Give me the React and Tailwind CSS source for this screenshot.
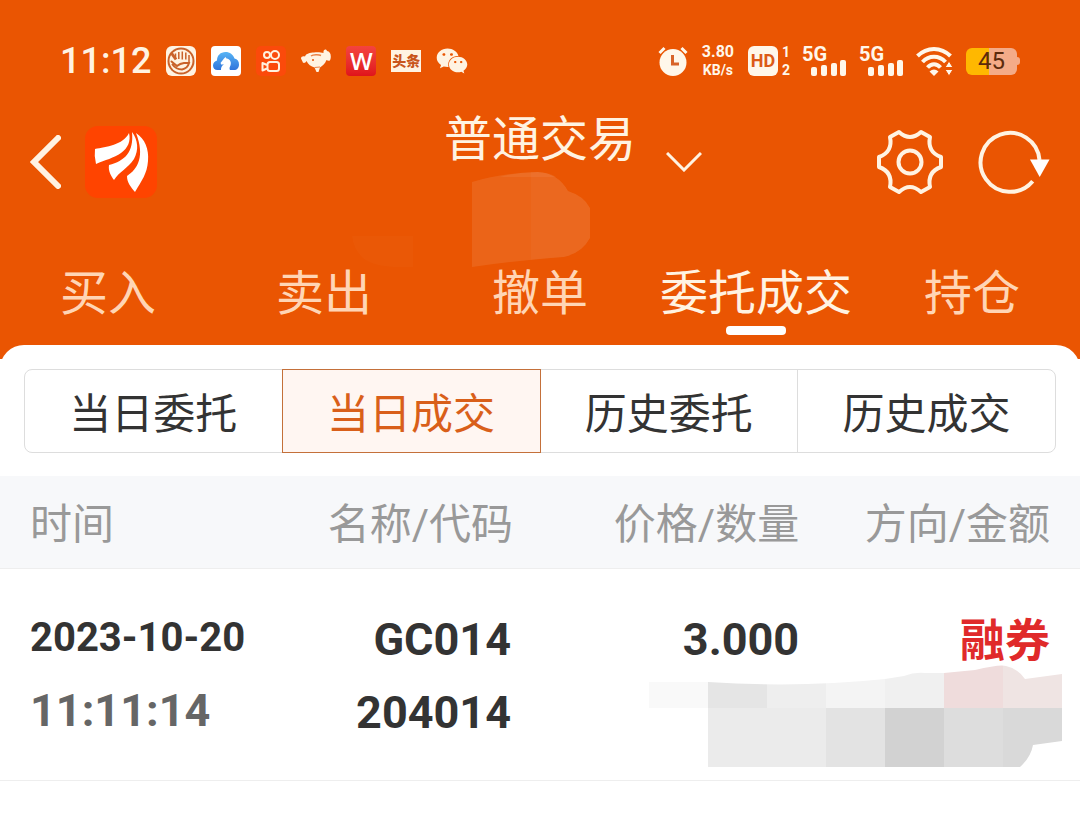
import { useState } from "react";
import { FaWeixin } from "react-icons/fa";

const tabs = ["买入", "卖出", "撤单", "委托成交", "持仓"];
const filters = ["当日委托", "当日成交", "历史委托", "历史成交"];

const trades = [
  {
    date: "2023-10-20",
    time: "11:11:14",
    name: "GC014",
    code: "204014",
    price: "3.000",
    side: "融券",
  },
];

function HandIcon() {
  return (
    <svg viewBox="0 0 30 30" className="size-[30px]">
      <rect width="30" height="30" rx="6" fill="#fff3e2" />
      <circle cx="15" cy="15" r="13.500" fill="#c9622a" />
      <circle cx="15" cy="15" r="11.500" fill="#fff3e2" />
      <path
        d="M9.500 7.500V12M12.800 6V13M16.300 5.500V13.500M19.800 6.500V13.500M23 9V16"
        stroke="#c9622a"
        strokeWidth="1.500"
      />
      <path
        d="M5.500 15.500L11 20Q14 17.500 18 17H23Q21.500 22.500 16 23.500Q10 23.500 6.500 18.500"
        fill="none"
        stroke="#c9622a"
        strokeWidth="2"
        strokeLinecap="round"
      />
      <path d="M5 6.500L10 13.500" stroke="#c9622a" strokeWidth="3" />
    </svg>
  );
}

function CloudIcon() {
  return (
    <svg viewBox="0 0 30 30" className="size-[30px]">
      <defs>
        <linearGradient id="cloud" x1="0" y1="0" x2="0" y2="1">
          <stop offset="0" stopColor="#57b4f5" />
          <stop offset="1" stopColor="#2f74dc" />
        </linearGradient>
      </defs>
      <rect width="30" height="30" rx="4" fill="#fff" />
      <path
        d="M6.500 24C3.500 24 2 22 2 19.500C2 17 3.800 15 6 14.500C6 9.500 9.500 6 14.500 6C19 6 22 8.500 23.500 12.500C26.500 13 28 15.500 28 18.500C28 22 26 24 23 24Z"
        fill="url(#cloud)"
      />
      <path
        d="M10 24C10 20.500 11.500 19.500 13 18L10.500 18.700L9.500 17L13 12.500L14.500 11L15.500 12.500C19.500 13 21 17 19 20.500C18.300 22 18.500 23 19 24Z"
        fill="#fff"
      />
    </svg>
  );
}

function CameraIcon() {
  return (
    <svg viewBox="0 0 30 30" className="size-[30px]">
      <rect width="30" height="30" rx="5" fill="#fb4a0b" />
      <g fill="none" stroke="#fff1df" strokeWidth="2">
        <circle cx="11" cy="9" r="3" />
        <circle cx="19" cy="9" r="4" />
        <rect x="11.500" y="16" width="11.500" height="9" rx="2.500" />
        <path d="M11 19L6.500 17V24.500L11 22.500" strokeLinejoin="round" />
      </g>
    </svg>
  );
}

function DogIcon() {
  return (
    <svg viewBox="0 0 30 30" className="size-[30px]">
      <path
        d="M0 12.500C0 10.500 2 10 4 10.500C5 7.500 9 6.500 13 6.500C17 6 20 6.500 22.500 7C22 3.500 25 2.500 26 5C29 5.500 30.500 8.500 29.500 13C29 15.500 27 15 25.500 14C24 18 21 20 19 21.500L17.500 26H15.500L13.500 21.500C10 20.500 7 18.500 5.500 15C4.500 17.500 1.500 17.500 1.500 15.500Z"
        fill="#fff3e2"
      />
      <path d="M10 10C12 8.500 18 8.500 20 9.500" fill="none" stroke="#ea8145" strokeWidth="1.500" />
      <circle cx="12" cy="14" r="1" fill="#ea5502" />
      <path d="M13.500 21.500L19 21" stroke="#ea8145" strokeWidth="1" />
    </svg>
  );
}

function AlarmIcon() {
  return (
    <svg viewBox="0 0 30 30" className="size-[30px]">
      <circle cx="15" cy="16.500" r="13.500" fill="#fff7ea" />
      <path d="M1.500 7L6.500 2M28.500 7L23.500 2" stroke="#fff7ea" strokeWidth="3" />
      <path d="M14.500 9V18H21" fill="none" stroke="#d8642a" strokeWidth="3" />
    </svg>
  );
}

function HdIcon() {
  return (
    <div className="flex h-[30px] items-center gap-1 font-[Roboto,sans-serif] font-bold">
      <span className="flex size-[30px] items-center justify-center rounded-md bg-[#fff7ea] text-lg leading-none text-[#dc5a17]">
        HD
      </span>
      <div className="text-sm leading-[18px]">
        <div>1</div>
        <div>2</div>
      </div>
    </div>
  );
}

function SignalIcon() {
  return (
    <div className="relative h-[30px] w-[45px] font-[Roboto,sans-serif]">
      <div className="-mt-0.5 text-xl leading-5 font-bold">5G</div>
      <svg viewBox="0 0 36 16" className="absolute right-0 bottom-0 h-4 w-9" fill="#fff7ea">
        <rect x="0" y="7" width="6" height="9" rx="2" />
        <rect x="10" y="5" width="6" height="11" rx="2" />
        <rect x="20" y="3" width="6" height="13" rx="2" />
        <rect x="29" y="0" width="6" height="16" rx="2" />
      </svg>
    </div>
  );
}

function WifiIcon() {
  return (
    <svg viewBox="0 0 38 30" className="h-[30px] w-[38px]">
      <g fill="none" stroke="#fff7ea" strokeWidth="4">
        <path d="M1.500 10C11 .500 25 .500 34.500 10" />
        <path d="M6.500 16C13 9 23 9 29.500 16" />
        <path d="M11.500 21.500C15.500 17 20.500 17 24.500 21.500" />
      </g>
      <path d="M13.500 25.500Q18 21.500 22.500 25.500L18 30Z" fill="#fff7ea" />
      <path d="M33 15L37 21.500H29ZM33 30L37 23.500H29Z" fill="#fff7ea" stroke="#ea5502" strokeWidth="1" />
    </svg>
  );
}

function BrandLogo() {
  return (
    <svg viewBox="0 0 72 72" className="size-[72px]">
      <rect width="72" height="72" rx="13" fill="#ff4400" />
      <g fill="#fff">
        <path d="M10 23C21 21 38 19 44 7C46 15 43 22 36 27C29 32 20 34 11 38Q9 30 10 23Z" />
        <path d="M47 6C53 14 54 24 49 33C43 42 34 46 29 54C26 50 23 45 24 39C40 35 49 26 47 6Z" />
        <path d="M51 7C60 13 64 23 63 35C62 48 57 54 50 66C46 61 42 57 42 50C53 43 60 30 51 7Z" />
      </g>
    </svg>
  );
}

function GearIcon() {
  return (
    <svg viewBox="-34 -34 68 68" className="size-[68px]" fill="none" stroke="#fff3e2" strokeWidth="4" strokeLinejoin="round">
      <path d="M31 -5L31 5Q17 10 20 25L11 30Q0 20 -11 30L-20 25Q-17 10 -31 5L-31 -5Q-17 -10 -20 -25L-11 -30Q0 -20 11 -30L20 -25Q17 -10 31 -5Z" />
      <circle r="11.500" />
    </svg>
  );
}

function RefreshIcon() {
  return (
    <svg viewBox="0 0 72 64" className="h-16 w-[72px]">
      <path d="M54.700 51.300A29.500 29.500 0 1 1 61.500 30" fill="none" stroke="#fff3e2" strokeWidth="4" />
      <path d="M52 29.500H71.500L61.700 47Z" fill="#fff" />
    </svg>
  );
}

function StatusBar() {
  return (
    <div className="flex h-[34px] items-center justify-between px-[60px]">
      <div className="flex items-center gap-[15px]">
        <span className="font-[Roboto,sans-serif] text-4xl font-medium text-[#fff3e2]">11:12</span>
        <HandIcon />
        <CloudIcon />
        <CameraIcon />
        <DogIcon />
        <span className="flex size-[30px] items-center justify-center rounded bg-linear-to-b from-[#f4433f] to-[#e0131b] font-['Open_Sans',sans-serif] text-2xl leading-none font-semibold text-white">
          W
        </span>
        <span className="flex h-[22px] w-[30px] items-center justify-center bg-[#fff3e2] text-sm font-black text-[#c9551c]">
          头条
        </span>
        <FaWeixin className="size-8 text-[#fff3e2]" />
      </div>
      <div className="flex items-center gap-3 text-[#fff7ea]">
        <AlarmIcon />
        <div className="w-9 text-center font-[Roboto,sans-serif] leading-[18px] font-bold">
          <div className="text-base leading-[18px]">3.80</div>
          <div className="text-sm leading-[18px]">KB/s</div>
        </div>
        <HdIcon />
        <SignalIcon />
        <SignalIcon />
        <WifiIcon />
        <div className="flex items-center">
          <span className="flex h-[27px] w-[51px] items-center justify-center rounded-md bg-linear-to-r from-[#ffb800] from-45% to-[#f4ab88] to-45% font-[Roboto,sans-serif] text-2xl text-[#5c2b0c]">
            45
          </span>
          <span className="h-2 w-[3px] rounded-r bg-[#f4ab88]" />
        </div>
      </div>
    </div>
  );
}

function HeaderMosaic() {
  return (
    <svg viewBox="0 0 240 96" className="pointer-events-none absolute top-[171px] left-[352px] h-24 w-60" fill="#fff">
      <path d="M120 11Q150 2 186 1Q206 2 216 20Q232 25 238 37V67Q230 82 212 86Q170 89 120 96Z" opacity=".09" />
      <path d="M179 1H186Q206 2 216 20Q232 25 238 37V67Q230 82 212 86L179 89Z" opacity=".03" />
      <path d="M148 6Q165 1 186 1Q200 2 204 6Z" opacity=".06" />
      <path d="M0 65H61V96Q20 98 9 85Q1 76 0 65Z" opacity=".02" />
    </svg>
  );
}

function AmountMosaic() {
  return (
    <svg viewBox="649 664 413 103" className="pointer-events-none absolute top-[95px] right-[18px] h-[103px] w-[413px]">
      <clipPath id="smudge">
        <path d="M649 682L708 682Q800 688 885 679L904 676Q914 672 925 673L944 673L975 670Q1000 664 1006 666Q1017 668 1025 679L1062 674V741L1033 745Q1031 757 1020 767H649Z" />
      </clipPath>
      <g clipPath="url(#smudge)" shapeRendering="crispEdges">
        <rect x="649" y="664" width="59" height="44" fill="#f9f9f9" />
        <rect x="708" y="664" width="59" height="44" fill="#e5e5e5" />
        <rect x="767" y="664" width="59" height="44" fill="#eeeeee" />
        <rect x="826" y="664" width="59" height="44" fill="#f4f4f4" />
        <rect x="885" y="664" width="59" height="44" fill="#f0f0f0" />
        <rect x="944" y="664" width="59" height="44" fill="#efdcdc" />
        <rect x="1003" y="664" width="59" height="44" fill="#efe4e3" />
        <rect x="708" y="708" width="118" height="59" fill="#ebebeb" />
        <rect x="826" y="708" width="59" height="59" fill="#e3e3e3" />
        <rect x="885" y="708" width="59" height="59" fill="#d2d2d2" />
        <rect x="944" y="708" width="59" height="59" fill="#dddddd" />
        <rect x="1003" y="708" width="59" height="59" fill="#d9d9d9" />
      </g>
    </svg>
  );
}

export default function App() {
  const [tab, setTab] = useState("委托成交");
  const [filter, setFilter] = useState("当日成交");

  return (
    <div className="min-h-screen bg-white font-[Roboto,'Noto_Sans_CJK_SC',sans-serif] text-[#333]">
      <header className="relative bg-[#ea5502] pt-11 pb-6">
        <HeaderMosaic />
        <StatusBar />

        <div className="mt-12 grid grid-cols-[1fr_auto_1fr] items-center px-[30px]">
          <div className="flex items-center gap-6">
            <button type="button" aria-label="返回">
              <svg viewBox="0 0 31 54" className="h-[54px] w-[31px]" fill="none" stroke="#fff3e2" strokeWidth="6" strokeLinecap="round">
                <path d="M28 3L4 27L28 51" />
              </svg>
            </button>
            <BrandLogo />
          </div>
          <h1 className="self-start text-5xl leading-7 text-[#fff3e2]">普通交易</h1>
          <div className="flex items-center justify-between pl-[30px]">
            <button type="button" aria-label="切换账户">
              <svg viewBox="0 0 36 20" className="h-5 w-9" fill="none" stroke="#fff3e2" strokeWidth="3">
                <path d="M1 1L18 18L35 1" />
              </svg>
            </button>
            <div className="flex items-center gap-[34px]">
              <button type="button" aria-label="设置">
                <GearIcon />
              </button>
              <button type="button" aria-label="刷新">
                <RefreshIcon />
              </button>
            </div>
          </div>
        </div>

        <nav className="mt-[66px] flex">
          {tabs.map((item) => (
            <button
              key={item}
              type="button"
              onClick={() => setTab(item)}
              className={`flex flex-1 flex-col items-center gap-0.5 text-5xl leading-[60px] ${
                item === tab ? "text-[#fff3e2]" : "text-[#ffd5b5]"
              }`}
            >
              {item}
              <span className={`h-[9px] w-[60px] rounded ${item === tab ? "bg-white" : ""}`} />
            </button>
          ))}
        </nav>
      </header>

      <main className="relative -mt-[14px] rounded-t-3xl bg-white pt-6">
        <div className="mx-6 flex h-[84px] rounded-lg border border-[#ddd]">
          {filters.map((item, i) => (
            <button
              key={item}
              type="button"
              onClick={() => setFilter(item)}
              className={`flex-1 pt-1.5 text-[42px] ${
                item === filter
                  ? "-my-px border border-[#c4703a] bg-[#fff6f2] text-[#d95f1a]"
                  : i === filters.length - 1
                    ? "border-l border-[#ddd]"
                    : ""
              }`}
            >
              {item}
            </button>
          ))}
        </div>

        <table className="mt-[23px] w-full table-fixed">
          <thead>
            <tr className="h-[92px] border-b border-[#eee] bg-[#f7f8fa] text-[42px] text-[#999]">
              <th className="w-[25%] pt-1.5 pl-[30px] text-left font-normal">时间</th>
              <th className="w-[22.5%] pt-1.5 text-right font-normal">名称/代码</th>
              <th className="w-[26.5%] pt-1.5 text-right font-normal">价格/数量</th>
              <th className="w-[26%] pt-1.5 pr-[30px] text-right font-normal">方向/金额</th>
            </tr>
          </thead>
          <tbody>
            {trades.map((trade) => (
              <tr key={trade.time} className="h-[212px] border-b border-[#eee] align-top text-[45px] leading-[73px] font-bold">
                <td className="pt-8 pl-[30px]">
                  <div className="text-[40px]">{trade.date}</div>
                  <div className="text-[#666]">{trade.time}</div>
                </td>
                <td className="pt-[34px] pr-0.5 text-right">
                  <div>{trade.name}</div>
                  <div>{trade.code}</div>
                </td>
                <td className="pt-[34px] text-right">{trade.price}</td>
                <td className="relative pt-9 pr-[30px] text-right text-[#e02a2a]">
                  {trade.side}
                  <AmountMosaic />
                </td>
              </tr>
            ))}
          </tbody>
        </table>
      </main>
    </div>
  );
}
